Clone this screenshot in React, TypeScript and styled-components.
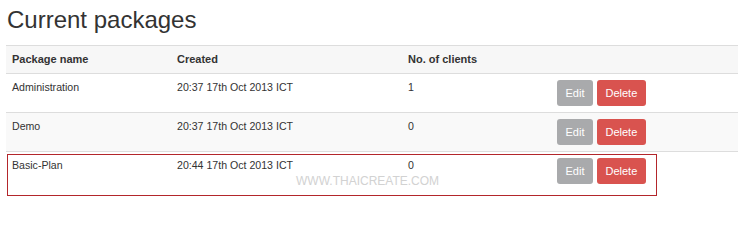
import React from "react";
import styled, { createGlobalStyle } from "styled-components";

const Global = createGlobalStyle`
  html, body { margin: 0; padding: 0; background: #fff; }
  body { font-family: "Liberation Sans", Arial, sans-serif; color: #333; }
`;

const Page = styled.div`
  position: relative;
  width: 738px;
  height: 207px;
  padding-left: 6px;
  box-sizing: border-box;
  overflow: hidden;
`;

const Title = styled.h1`
  margin: 7px 0 12px 1px;
  font-size: 24px;
  line-height: 26.4px;
  font-weight: normal;
  color: #333;
`;

const Table = styled.table`
  width: 732px;
  border-collapse: collapse;
  table-layout: fixed;
`;

const Col = styled.col<{ $w: number }>`
  width: ${(p) => p.$w}px;
`;

const HeadCell = styled.th`
  box-sizing: border-box;
  text-align: left;
  vertical-align: top;
  font-size: 11px;
  line-height: 15px;
  font-weight: bold;
  padding: 6px;
  background: #f7f7f7;
  border-top: 1px solid #dddddd;
  border-bottom: 1px solid #dddddd;
  color: #333;
`;

const Row = styled.tr<{ $striped?: boolean }>`
  background: ${(p) => (p.$striped ? "#f9f9f9" : "#fff")};
`;

const Cell = styled.td`
  box-sizing: border-box;
  vertical-align: top;
  font-size: 10.6px;
  line-height: 15px;
  padding: 6px;
  height: 38px;
  border-top: 1px solid #dddddd;
  color: #333;
`;

const Actions = styled.div`
  display: flex;
  gap: 4px;
`;

const Button = styled.button<{ $variant: "edit" | "delete" }>`
  height: 26px;
  padding: 0 8.5px;
  border: none;
  border-radius: 3px;
  font-family: "Liberation Sans", Arial, sans-serif;
  font-size: 11px;
  color: #fff;
  background: ${(p) => (p.$variant === "edit" ? "#a9aaac" : "#d9534f")};
  cursor: pointer;
`;

const Highlight = styled.div`
  position: absolute;
  left: 7px;
  top: 154px;
  width: 650px;
  height: 42px;
  border: 1px solid #b3262b;
  box-sizing: border-box;
  pointer-events: none;
`;

const Watermark = styled.div`
  position: absolute;
  left: 296px;
  top: 174px;
  font-size: 12px;
  line-height: 14px;
  color: #d2d2d2;
  pointer-events: none;
`;

const rows = [
  { name: "Administration", created: "20:37 17th Oct 2013 ICT", clients: "1" },
  { name: "Demo", created: "20:37 17th Oct 2013 ICT", clients: "0" },
  { name: "Basic-Plan", created: "20:44 17th Oct 2013 ICT", clients: "0" },
];

export default function App() {
  return (
    <>
      <Global />
      <Page>
        <Title>Current packages</Title>
        <Table>
          <colgroup>
            <Col $w={165} />
            <Col $w={231} />
            <Col $w={149} />
            <Col $w={187} />
          </colgroup>
          <thead>
            <tr>
              <HeadCell>Package name</HeadCell>
              <HeadCell>Created</HeadCell>
              <HeadCell>No. of clients</HeadCell>
              <HeadCell></HeadCell>
            </tr>
          </thead>
          <tbody>
            {rows.map((r, i) => (
              <Row key={r.name} $striped={i % 2 === 1}>
                <Cell>{r.name}</Cell>
                <Cell>{r.created}</Cell>
                <Cell>{r.clients}</Cell>
                <Cell>
                  <Actions>
                    <Button $variant="edit">Edit</Button>
                    <Button $variant="delete">Delete</Button>
                  </Actions>
                </Cell>
              </Row>
            ))}
          </tbody>
        </Table>
        <Highlight />
        <Watermark>WWW.THAICREATE.COM</Watermark>
      </Page>
    </>
  );
}
